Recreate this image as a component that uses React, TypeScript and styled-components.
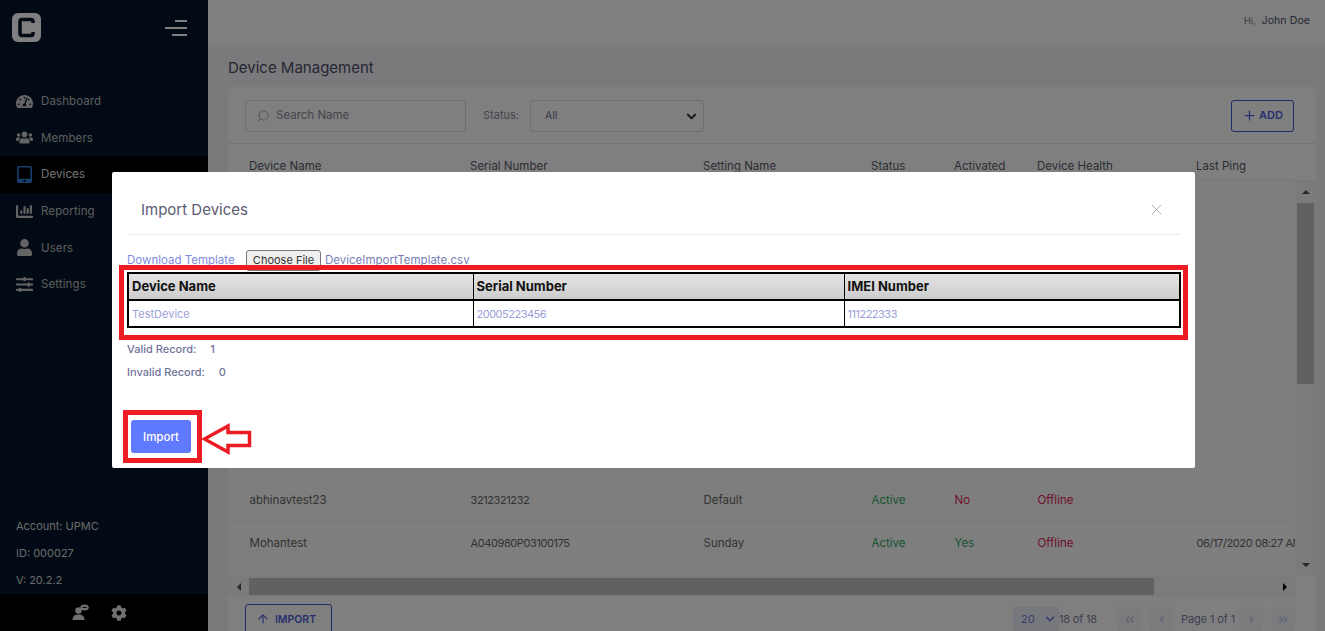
import styled, { createGlobalStyle } from "styled-components";
import {
  FaTachometerAlt,
  FaUsers,
  FaTabletAlt,
  FaChartBar,
  FaUser,
  FaSlidersH,
  FaCog,
  FaChevronDown,
  FaAngleDoubleLeft,
  FaAngleDoubleRight,
  FaAngleLeft,
  FaAngleRight,
} from "react-icons/fa";
import { Search, X, Plus, ArrowUp } from "lucide-react";

const GlobalStyle = createGlobalStyle`
  html, body {
    margin: 0;
    height: 100%;
    overflow: hidden;
  }
  * {
    box-sizing: border-box;
  }
  body {
    font-family: Inter, "Liberation Sans", sans-serif;
    color: #666;
  }
`;

const Shell = styled.div`
  display: grid;
  grid-template-columns: 208px 1fr;
  grid-template-rows: 100vh;
  height: 100vh;
  overflow: hidden;
`;

/* sidebar */
const Sidebar = styled.aside`
  background: #05172a;
  display: flex;
  flex-direction: column;
  min-height: 0;
  color: #e6e6e6;
`;

const Brand = styled.div`
  height: 83px;
  flex: none;
  padding: 13px 21px 0 12px;
  display: flex;
  justify-content: space-between;
  align-items: flex-start;
`;

const Burger = styled.div`
  width: 22px;
  margin-top: 7px;
  display: flex;
  flex-direction: column;
  align-items: flex-end;
  gap: 5.5px;
`;

const BurgerLine = styled.span<{ $w: number }>`
  display: block;
  width: ${(p) => p.$w}px;
  height: 1.5px;
  background: #fff;
`;

const Nav = styled.nav`
  display: flex;
  flex-direction: column;
`;

const NavItem = styled.div<{ $active?: boolean }>`
  height: 36.6px;
  padding-left: 16px;
  display: flex;
  align-items: center;
  gap: 8px;
  font-size: 11.5px;
  letter-spacing: 0.1px;
  background: ${(p) => (p.$active ? "#000" : "transparent")};
  color: ${(p) => (p.$active ? "#e0e0e0" : "#bcbcbc")};

  svg {
    width: 17px;
    height: 17px;
    flex: none;
    color: ${(p) => (p.$active ? "#2f7fd8" : "#c8c8c8")};
  }
`;

const AccountInfo = styled.div`
  margin-top: auto;
  margin-bottom: 7px;
  padding-left: 16px;
  display: flex;
  flex-direction: column;
  gap: 13px;
  font-size: 11px;
  line-height: 14px;
  color: #d4d4d4;
`;

const BottomBar = styled.div`
  height: 37px;
  flex: none;
  background: #000;
  display: flex;
  align-items: center;
  justify-content: center;
  gap: 22px;
  padding-right: 10px;
  color: #e0e0e0;
`;

/* main */
const Main = styled.div`
  display: flex;
  flex-direction: column;
  min-width: 0;
  min-height: 0;
  overflow: hidden;
  background: #f4f5f8;
`;

const Header = styled.header`
  height: 45px;
  flex: none;
  background: #fff;
  display: flex;
  align-items: center;
  justify-content: flex-end;
  gap: 6px;
  padding: 0 15px 4px 0;
  font-size: 10.5px;
`;

const Hi = styled.span`
  font-size: 9px;
  color: #777;
`;

const UserName = styled.span`
  color: #4a4a6a;
  letter-spacing: 0.1px;
`;

const Content = styled.div`
  flex: 1;
  min-height: 0;
  padding: 0 9px 0 20px;
  display: flex;
  flex-direction: column;
`;

const PageTitle = styled.h1`
  height: 42px;
  flex: none;
  margin: 0;
  padding-top: 14px;
  font-size: 15px;
  line-height: 18px;
  font-weight: 400;
  color: #4a4a66;
`;

const Card = styled.section`
  background: #fff;
  border-radius: 4px 4px 0 0;
  display: flex;
  flex-direction: column;
  height: 580px;
  flex: none;
`;

const Toolbar = styled.div`
  height: 57px;
  flex: none;
  padding: 13px 22px 0 17px;
  border-bottom: 1px solid #e6e8f0;
  display: flex;
  align-items: flex-start;
`;

const SearchBox = styled.div`
  width: 221px;
  height: 32px;
  border: 1px solid #dcdfe8;
  border-radius: 3px;
  padding: 0 0 2px 10px;
  display: flex;
  align-items: center;
  gap: 6px;
  font-size: 11.5px;
  color: #8a8a9a;

  svg {
    transform: scaleX(-1);
    margin-top: 2px;
  }
`;

const StatusLabel = styled.span`
  margin-left: 17px;
  width: 47px;
  line-height: 31px;
  font-size: 11px;
  color: #8a8a9a;
`;

const StatusSelect = styled.div`
  width: 174px;
  height: 32px;
  border: 1px solid #dcdfe8;
  border-radius: 3px;
  padding: 0 6px 2px 14px;
  display: flex;
  align-items: center;
  justify-content: space-between;
  font-size: 10.5px;
  color: #6a6f9a;

  svg {
    color: #222;
    margin-top: 2px;
  }
`;

const OutlineButton = styled.div`
  height: 32px;
  border: 1.5px solid #4257c8;
  border-radius: 3px;
  display: flex;
  align-items: center;
  justify-content: center;
  gap: 2px;
  font-size: 11px;
  font-weight: 600;
  color: #4c60d8;
`;

const AddButton = styled(OutlineButton)`
  width: 63px;
  margin-left: auto;
  padding-bottom: 2px;
`;

const ImportButton = styled(OutlineButton)`
  width: 87px;
  height: 36px;
  gap: 5px;
  padding: 0 5px 6px 0;
  font-size: 10.5px;
`;

const columns = "221px 233px 168px 83px 83px 159px 1fr";

const TableHead = styled.div`
  height: 37px;
  flex: none;
  padding: 7px 0 0 21px;
  display: grid;
  grid-template-columns: ${columns};
  align-items: center;
  font-size: 11.5px;
  white-space: nowrap;
  color: #5a5a6a;
  border-bottom: 1px solid #eceef4;
`;

const TableBody = styled.div`
  flex: none;
  height: 395px;
  display: flex;
`;

const Rows = styled.div`
  flex: 1;
  min-width: 0;
  overflow: hidden;
  padding-bottom: 13px;
  display: flex;
  flex-direction: column;
  justify-content: flex-end;
  background: #fbfdfb;
`;

const Row = styled.div<{ $divider?: boolean }>`
  height: 42px;
  flex: none;
  padding-left: 21.5px;
  display: grid;
  grid-template-columns: ${columns};
  align-items: center;
  font-size: 11.5px;
  white-space: nowrap;
  color: #666;
  border-top: ${(p) => (p.$divider ? "1px solid #eef0ee" : "none")};
`;

const NumberCell = styled.span`
  font-size: 11px;
  letter-spacing: -0.4px;
`;

const Flag = styled.span<{ $ok: boolean }>`
  color: ${(p) => (p.$ok ? "#2fa866" : "#e0245a")};
`;

const VScroll = styled.div`
  width: 21px;
  flex: none;
  background: #f6f6f6;
  display: flex;
  flex-direction: column;
  align-items: center;
`;

const ScrollArrow = styled.div<{ $end?: boolean }>`
  height: 22px;
  flex: none;
  margin-top: ${(p) => (p.$end ? "auto" : "0")};
  display: flex;
  align-items: center;
  justify-content: center;
`;

const VThumb = styled.div`
  width: 17px;
  height: 181px;
  background: #c2c2c2;
`;

const Triangle = styled.span<{ $dir: "up" | "down" | "left" | "right" }>`
  display: block;
  width: 0;
  height: 0;
  border: 4.5px solid transparent;
  ${(p) =>
    p.$dir === "up"
      ? "border-bottom-color: #505050; margin-bottom: 4px;"
      : p.$dir === "down"
        ? "border-top-color: #505050; margin-top: 4px;"
        : p.$dir === "left"
          ? "border-right-color: #505050; margin-right: 4px;"
          : "border-left-color: #000; margin-left: 4px;"}
`;

const HScroll = styled.div`
  height: 21px;
  flex: none;
  margin-right: 21px;
  background: #f6f6f6;
  display: flex;
  align-items: center;
`;

const HArrow = styled.div`
  width: 21px;
  flex: none;
  display: flex;
  justify-content: center;
`;

const HThumb = styled.div`
  width: 905px;
  height: 17px;
  background: #c2c2c2;
`;

const HSpace = styled.div`
  flex: 1;
`;

const CardFooter = styled.div`
  padding: 7px 21px 0 17px;
  display: flex;
  justify-content: space-between;
  align-items: flex-start;
`;

const Pager = styled.div`
  height: 26px;
  margin-top: 2px;
  display: flex;
  align-items: center;
  font-size: 11px;
  color: #7a7f9f;
`;

const PageSize = styled.div`
  width: 46px;
  height: 24px;
  padding: 0 4px 0 8px;
  border-radius: 3px;
  background: #eef0fb;
  display: flex;
  align-items: center;
  justify-content: space-between;
  color: #6f80d8;
`;

const PageCount = styled.span`
  width: 58px;
  letter-spacing: -0.2px;
`;

const PageLabel = styled.span`
  width: 58px;
  white-space: nowrap;
  letter-spacing: -0.1px;
`;

const PageButton = styled.div`
  width: 24px;
  height: 24px;
  margin-right: 8px;
  background: #f6f7fc;
  border-radius: 3px;
  display: flex;
  align-items: center;
  justify-content: center;
  color: #c8cfe8;
  &:last-child {
    margin-right: 0;
  }
`;

/* modal */
const Backdrop = styled.div`
  position: fixed;
  inset: 0;
  background: rgba(0, 0, 0, 0.5);
`;

const Modal = styled.div`
  position: fixed;
  left: 112px;
  top: 172px;
  width: 1083px;
  height: 296px;
  padding: 0 15px;
  background: #fff;
  border-radius: 2px;
`;

const ModalHeader = styled.div`
  height: 63px;
  padding: 13px 15px 0 14px;
  border-bottom: 1px solid #e9ecef;
  display: flex;
  align-items: center;
  justify-content: space-between;
  color: #a4a8b4;
`;

const ModalTitle = styled.h2`
  margin: 0;
  font-size: 15px;
  font-weight: 400;
  color: #5a5a72;
`;

const UploadRow = styled.div`
  height: 37px;
  padding-top: 13px;
  display: flex;
  align-items: center;
  font-size: 11.5px;
  white-space: nowrap;
  color: #7a7fb8;
`;

const TemplateLink = styled.a`
  width: 119px;
  color: #7f8ce0;
`;

const ChooseFile = styled.button`
  width: 75px;
  height: 21px;
  padding: 0;
  margin-right: 4px;
  background: #efefef;
  border: 1px solid #767676;
  border-radius: 3px;
  font: 11px Inter, "Liberation Sans", sans-serif;
  color: #333;
`;

const Marked = styled.div<{ $t: number; $r: number; $b: number; $l: number }>`
  position: relative;
  &::after {
    content: "";
    position: absolute;
    top: ${(p) => -p.$t}px;
    right: ${(p) => -p.$r}px;
    bottom: ${(p) => -p.$b}px;
    left: ${(p) => -p.$l}px;
    border: 5px solid #ed1c24;
    pointer-events: none;
  }
`;

const PreviewWrap = styled(Marked)`
  width: 1054px;
`;

const Preview = styled.table`
  width: 100%;
  height: 56px;
  table-layout: fixed;
  border-collapse: collapse;
  border: 2px solid #000;
  font-size: 11px;

  th {
    height: 27px;
    padding: 0 3px 1px;
    text-align: left;
    font-size: 13px;
    font-weight: 700;
    color: #111;
    background: linear-gradient(#e4e4e4, #cccccc);
    border-right: 1px solid #000;
    border-bottom: 2px solid #000;
  }

  td {
    padding: 0 3px;
    color: #9aa0d8;
    border-right: 1px solid #000;
  }
`;

const NumberData = styled.td`
  letter-spacing: -0.5px;
`;

const Stats = styled.div`
  margin-top: 14px;
  display: flex;
  flex-direction: column;
  gap: 9px;
  font-size: 11px;
  line-height: 14px;
  font-weight: 500;
  color: #6f7399;
`;

const StatValue = styled.span`
  margin-left: 14px;
`;

const ModalActions = styled.div`
  margin-top: 41px;
  margin-left: 4px;
  display: flex;
`;

const SubmitButton = styled.button`
  display: block;
  width: 60px;
  height: 33px;
  padding: 0;
  border: 0;
  border-radius: 3px;
  background: #5f79ff;
  font: 500 11.5px Inter, "Liberation Sans", sans-serif;
  color: #fff;
`;

const Arrow = styled.svg`
  position: absolute;
  left: 71px;
  top: 3px;
  width: 50px;
  height: 32px;
`;

const UserChatIcon = () => (
  <svg width="17" height="17" viewBox="0 0 17 17" fill="currentColor">
    <circle cx="6.5" cy="6.5" r="3.2" />
    <path d="M0.5 16c0-3.6 2.4-5.4 6-5.4s6 1.8 6 5.4z" />
    <ellipse cx="12.6" cy="3.4" rx="4.2" ry="3" />
    <rect x="10.6" y="2.9" width="4" height="1" fill="#000" />
  </svg>
);

const LogoMark = () => (
  <svg width="29" height="29" viewBox="0 0 29 29">
    <rect width="29" height="29" rx="6" fill="#fff" />
    <path d="M21 10V8.5a2 2 0 0 0-2-2H10a2 2 0 0 0-2 2v12a2 2 0 0 0 2 2h9a2 2 0 0 0 2-2V19" fill="none" stroke="#05172a" strokeWidth="3.5" />
  </svg>
);

const devices = [
  { name: "abhinavtest23", serial: "3212321232", setting: "Default", activated: false, ping: "" },
  { name: "Mohantest", serial: "A040980P03100175", setting: "Sunday", activated: true, ping: "06/17/2020 08:27 AM" },
];

export default function App() {
  return (
    <>
      <GlobalStyle />
      <Shell>
        <Sidebar>
          <Brand>
            <LogoMark />
            <Burger>
              <BurgerLine $w={12} />
              <BurgerLine $w={22} />
              <BurgerLine $w={15} />
            </Burger>
          </Brand>
          <Nav>
            <NavItem><FaTachometerAlt />Dashboard</NavItem>
            <NavItem><FaUsers />Members</NavItem>
            <NavItem $active><FaTabletAlt />Devices</NavItem>
            <NavItem><FaChartBar />Reporting</NavItem>
            <NavItem><FaUser />Users</NavItem>
            <NavItem><FaSlidersH />Settings</NavItem>
          </Nav>
          <AccountInfo>
            <span>Account: UPMC</span>
            <span>ID: 000027</span>
            <span>V: 20.2.2</span>
          </AccountInfo>
          <BottomBar>
            <UserChatIcon />
            <FaCog size={16} />
          </BottomBar>
        </Sidebar>

        <Main>
          <Header>
            <Hi>Hi,</Hi>
            <UserName>John Doe</UserName>
          </Header>
          <Content>
            <PageTitle>Device Management</PageTitle>
            <Card>
              <Toolbar>
                <SearchBox>
                  <Search size={14} strokeWidth={1.25} />
                  Search Name
                </SearchBox>
                <StatusLabel>Status:</StatusLabel>
                <StatusSelect>
                  All
                  <FaChevronDown size={11} />
                </StatusSelect>
                <AddButton>
                  <Plus size={15} />
                  ADD
                </AddButton>
              </Toolbar>
              <TableHead>
                <span>Device Name</span>
                <span>Serial Number</span>
                <span>Setting Name</span>
                <span>Status</span>
                <span>Activated</span>
                <span>Device Health</span>
                <span>Last Ping</span>
              </TableHead>
              <TableBody>
                <Rows>
                  {devices.map((d, i) => (
                    <Row key={d.name} $divider={i > 0}>
                      <span>{d.name}</span>
                      <NumberCell>{d.serial}</NumberCell>
                      <span>{d.setting}</span>
                      <Flag $ok>Active</Flag>
                      <Flag $ok={d.activated}>{d.activated ? "Yes" : "No"}</Flag>
                      <Flag $ok={false}>Offline</Flag>
                      <NumberCell>{d.ping}</NumberCell>
                    </Row>
                  ))}
                </Rows>
                <VScroll>
                  <ScrollArrow><Triangle $dir="up" /></ScrollArrow>
                  <VThumb />
                  <ScrollArrow $end><Triangle $dir="down" /></ScrollArrow>
                </VScroll>
              </TableBody>
              <HScroll>
                <HArrow><Triangle $dir="left" /></HArrow>
                <HThumb />
                <HSpace />
                <HArrow><Triangle $dir="right" /></HArrow>
              </HScroll>
              <CardFooter>
                <ImportButton>
                  <ArrowUp size={14} />
                  IMPORT
                </ImportButton>
                <Pager>
                  <PageSize>
                    20
                    <FaChevronDown size={10} />
                  </PageSize>
                  <PageCount>18 of 18</PageCount>
                  <PageButton><FaAngleDoubleLeft size={11} /></PageButton>
                  <PageButton><FaAngleLeft size={11} /></PageButton>
                  <PageLabel>Page 1 of 1</PageLabel>
                  <PageButton><FaAngleRight size={11} /></PageButton>
                  <PageButton><FaAngleDoubleRight size={11} /></PageButton>
                </Pager>
              </CardFooter>
            </Card>
          </Content>
        </Main>
      </Shell>

      <Backdrop />
      <Modal>
        <ModalHeader>
          <ModalTitle>Import Devices</ModalTitle>
          <X size={17} strokeWidth={1.25} />
        </ModalHeader>
        <UploadRow>
          <TemplateLink>Download Template</TemplateLink>
          <ChooseFile>Choose File</ChooseFile>
          DeviceImportTemplate.csv
        </UploadRow>
        <PreviewWrap $t={7} $r={7} $b={12} $l={8}>
          <Preview>
            <colgroup>
              <col style={{ width: 345 }} />
              <col style={{ width: 371 }} />
              <col />
            </colgroup>
            <thead>
              <tr>
                <th>Device Name</th>
                <th>Serial Number</th>
                <th>IMEI Number</th>
              </tr>
            </thead>
            <tbody>
              <tr>
                <td>TestDevice</td>
                <NumberData>20005223456</NumberData>
                <NumberData>111222333</NumberData>
              </tr>
            </tbody>
          </Preview>
        </PreviewWrap>
        <Stats>
          <div>Valid Record:<StatValue>1</StatValue></div>
          <div>Invalid Record:<StatValue>0</StatValue></div>
        </Stats>
        <ModalActions>
          <Marked $t={10} $r={11} $b={10} $l={8}>
            <SubmitButton>Import</SubmitButton>
            <Arrow viewBox="0 0 50 32">
              <path d="M2.5 16 L26 3 V9.5 H47.5 V22.5 H26 V29 Z" fill="#fff" stroke="#ed1c24" strokeWidth="3.5" />
            </Arrow>
          </Marked>
        </ModalActions>
      </Modal>
    </>
  );
}
